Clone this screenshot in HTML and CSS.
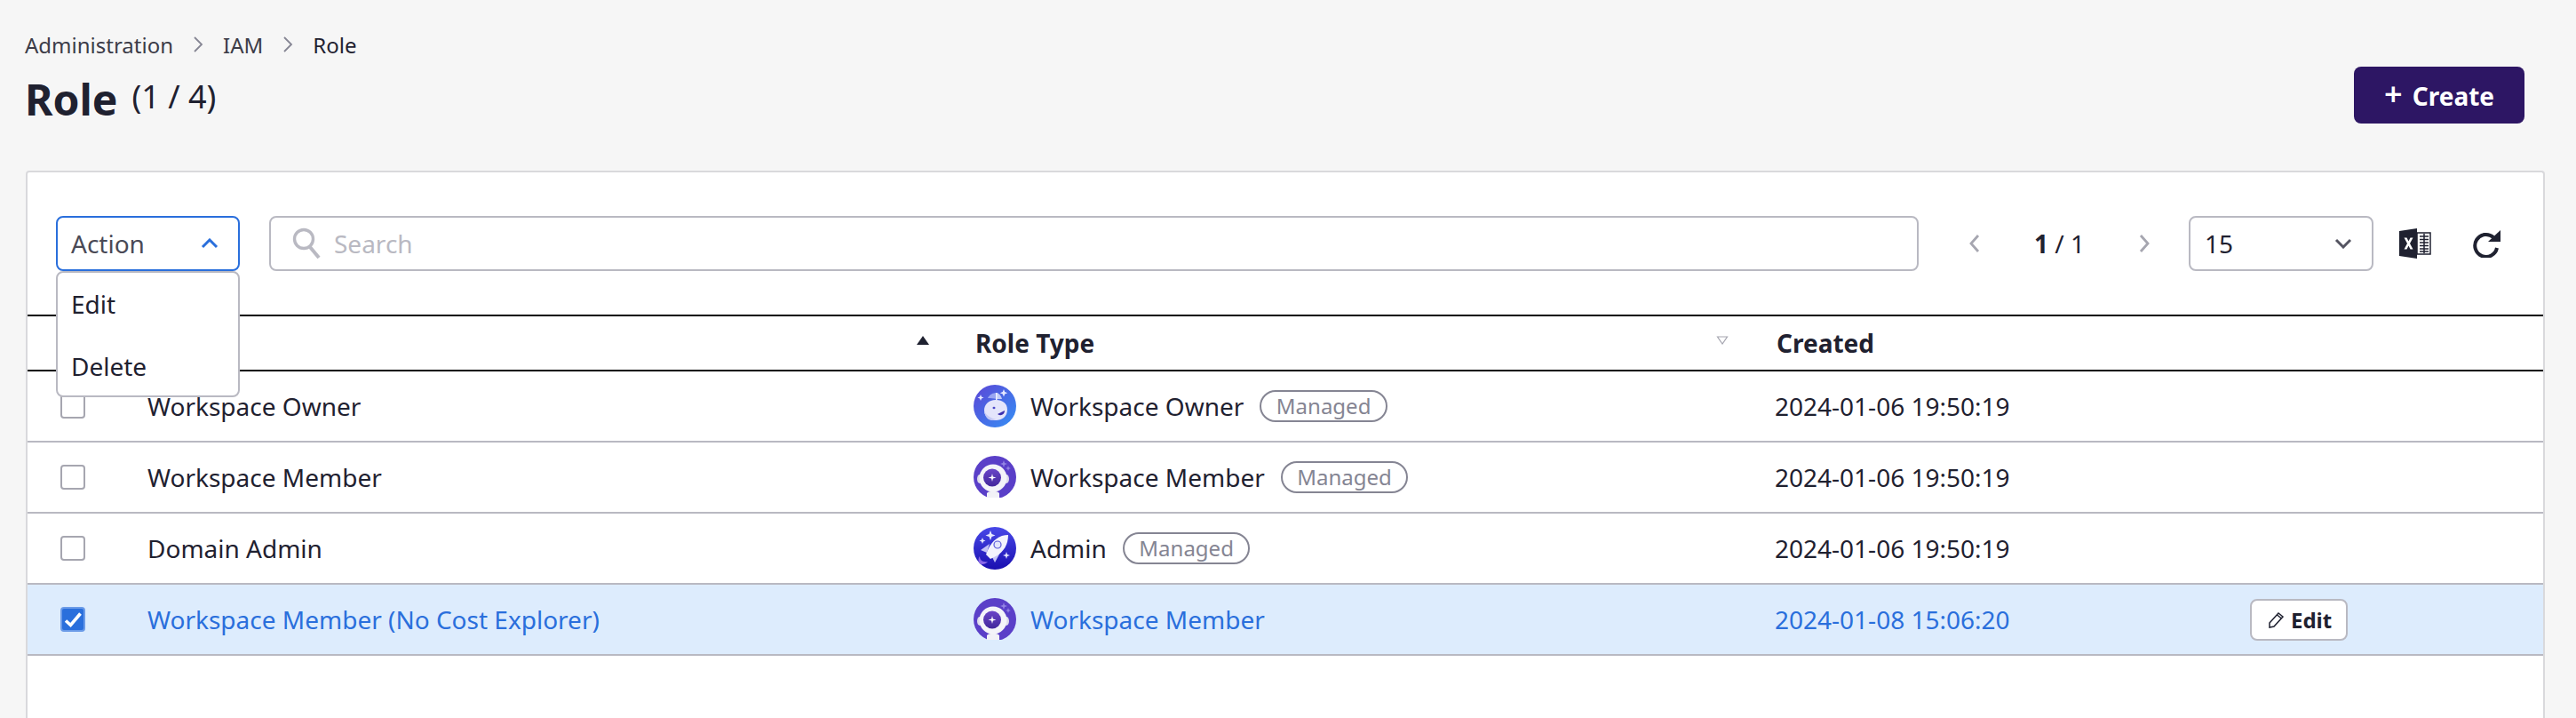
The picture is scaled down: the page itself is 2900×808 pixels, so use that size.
FILE: index.html
```html
<!DOCTYPE html>
<html lang="en">
<head>
    <meta charset="UTF-8">
    <title>Role</title>
    <link rel="stylesheet" href="styles.css">
</head>
<body>
    <svg class="defs" width="0" height="0">
        <defs>
            <linearGradient id="ownerBg" x1="0" y1="0" x2="1" y2="1">
                <stop offset="0" stop-color="#5b45d6"/>
                <stop offset="1" stop-color="#3590f5"/>
            </linearGradient>
            <linearGradient id="adminBg" x1="0" y1="0" x2="0" y2="1">
                <stop offset="0" stop-color="#4848e8"/>
                <stop offset="1" stop-color="#1a0fb0"/>
            </linearGradient>
            <linearGradient id="visorBg" x1="0" y1="0" x2="0" y2="1">
                <stop offset="0" stop-color="#6a45c8"/>
                <stop offset="1" stop-color="#42279c"/>
            </linearGradient>
            <symbol id="iconOwner" viewBox="0 0 48 48">
                <circle cx="24" cy="24" r="24" fill="url(#ownerBg)"/>
                <path d="M16 15c2-4 6-6 10-6v7c-4-1-7-1-10-1z" fill="#9aa6f2"/>
                <path d="M26 9c2 0 5 3 6 7l-6 0z" fill="#c3ccf8"/>
                <rect x="25" y="9" width="1.500" height="9" fill="#eef0ff"/>
                <path d="M12 29c0-7 5-12 13-12s13 4 13 11c0 8-6 12-13 12-3 0-6 0-8-2-3-2-5-5-5-9z" fill="#e4e5fb"/>
                <path d="M12 30c3 5 8 8 14 9l-5 1c-5 0-8-4-9-10z" fill="#c4c9f5"/>
                <ellipse cx="23" cy="26" rx="1.500" ry="1.300" fill="#4a46c8"/>
                <path d="M27 33l8-4c0 4-4 7-8 4z" fill="#3b2fae"/>
                <path d="M8 11l1 2.500 2.500 1-2.500 1-1 2.500-1-2.500-2.500-1 2.500-1z M34 5l1.200 3 3 1.200-3 1.200-1.200 3-1.200-3-3-1.200 3-1.200z" fill="#e6e9ff"/>
            </symbol>
            <symbol id="iconMember" viewBox="0 0 48 48">
                <clipPath id="memberClip"><path d="M0 0h48v47H0z"/></clipPath>
                <g clip-path="url(#memberClip)">
                    <circle cx="24" cy="24" r="24" fill="#5a3fc8"/>
                    <path d="M15 42c2-3 12-3 14 0v6H15z" fill="#f2f2f7"/>
                    <ellipse cx="7" cy="26" rx="3" ry="5" fill="#dcdbe9"/>
                    <ellipse cx="37" cy="26" rx="3" ry="5" fill="#dcdbe9"/>
                    <circle cx="22" cy="25" r="15.500" fill="#f4f4f9"/>
                    <circle cx="21" cy="24.500" r="10" fill="url(#visorBg)"/>
                    <path d="M21 20l.9 3.600 3.600.9-3.600.9-.9 3.600-.9-3.600-3.600-.9 3.600-.9z" fill="#fff"/>
                    <path d="M34 5l1 3 3 1-3 1-1 3-1-3-3-1 3-1z M39 11l.8 2.200 2.200.8-2.200.8-.8 2.200-.8-2.200-2.200-.8 2.200-.8z" fill="#9485e4"/>
                </g>
            </symbol>
            <symbol id="iconAdmin" viewBox="0 0 48 48">
                <circle cx="24" cy="24" r="24" fill="url(#adminBg)"/>
                <path d="M7 33c0 4 3 7 9 6-2 3-7 4-9 2s-2-6 0-8z" fill="#8a68e8"/>
                <path d="M8 26l10-7-3 10z M24 40l6-11-9 5z" fill="#c4c2f6"/>
                <path d="M39 9c-10 0-18 6-23 17l-2 5 5 5 6-3c9-5 14-13 14-24z" fill="#f3f3fd"/>
                <circle cx="27" cy="20" r="4" fill="#e3e5fb" stroke="#5a5ad8" stroke-width="1.200"/>
                <path d="M19 4l1.500 4 4 1.500-4 1.500-1.500 4-1.500-4-4-1.500 4-1.500z M10 12l1 2.500 2.500 1-2.500 1-1 2.500-1-2.500-2.500-1 2.500-1z M37 28l1 3 3 1-3 1-1 3-1-3-3-1 3-1z" fill="#e6e9ff"/>
            </symbol>
        </defs>
    </svg>

    <header class="page-head">
        <nav class="breadcrumb">
            <span>Administration</span>
            <svg class="crumb-arrow" viewBox="0 0 12 20"><path d="M2 2l8 8-8 8" fill="none" stroke="#858593" stroke-width="1.800"/></svg>
            <span>IAM</span>
            <svg class="crumb-arrow" viewBox="0 0 12 20"><path d="M2 2l8 8-8 8" fill="none" stroke="#858593" stroke-width="1.800"/></svg>
            <span class="current">Role</span>
        </nav>
        <div class="title-row">
            <h1>Role</h1>
            <span class="count">(1 / 4)</span>
            <button class="btn-create"><span class="plus">+</span> Create</button>
        </div>
    </header>

    <section class="card">
        <div class="toolbar">
            <div class="action-wrap">
                <div class="action">
                    <span>Action</span>
                    <svg class="caret" viewBox="0 0 20 12"><path d="M2 10l8-8 8 8" fill="none" stroke="#2a6fdc" stroke-width="3"/></svg>
                </div>
                <ul class="action-menu">
                    <li>Edit</li>
                    <li>Delete</li>
                </ul>
            </div>
            <div class="search">
                <svg class="search-icon" viewBox="0 0 32 36"><circle cx="13" cy="13" r="10.500" fill="none" stroke="#b9b9c2" stroke-width="3.400"/><path d="M20 22l10 12" stroke="#b9b9c2" stroke-width="4"/></svg>
                <span>Search</span>
            </div>
            <div class="pager">
                <svg class="pager-arrow" viewBox="0 0 14 22"><path d="M11 2L3 11l8 9" fill="none" stroke="#a6a6b0" stroke-width="2.800"/></svg>
                <span class="pages"><b>1</b> / 1</span>
                <svg class="pager-arrow" viewBox="0 0 14 22"><path d="M3 2l8 9-8 9" fill="none" stroke="#a6a6b0" stroke-width="2.800"/></svg>
            </div>
            <div class="page-size">
                <span>15</span>
                <svg class="caret" viewBox="0 0 20 12"><path d="M2 2l8 8 8-8" fill="none" stroke="#555562" stroke-width="3"/></svg>
            </div>
            <svg class="excel" viewBox="0 0 36 34">
                <path d="M20 5h15v24H20z" fill="#fff" stroke="#1f2130" stroke-width="1.500"/>
                <path d="M23 9h10M23 12.500h10M23 16h10M23 19.500h10M23 23h10M23 26h10M28 6v22" stroke="#1f2130" stroke-width="1.500"/>
                <path d="M0 3L20 0v34L0 31z" fill="#1f2130"/>
                <path d="M5.500 10.500h3l2 4 2-4h3l-3.500 6.500 3.500 6.500h-3l-2-4-2 4h-3L9 17z" fill="#fff"/>
            </svg>
            <svg class="refresh" viewBox="0 0 32 31">
                <path d="M27 20a12.500 12.500 0 1 1-4-12" fill="none" stroke="#1f2130" stroke-width="4"/>
                <path d="M31 0v13H17z" fill="#1f2130"/>
            </svg>
        </div>

        <table class="role-table">
            <colgroup>
                <col class="col-check"><col class="col-name"><col class="col-type"><col class="col-created"><col>
            </colgroup>
            <thead>
                <tr>
                    <th></th>
                    <th>
                        <div class="th-in">Name
                            <svg class="sort" viewBox="0 0 14 10"><path d="M7 0l7 10H0z" fill="#1f2130"/></svg>
                        </div>
                    </th>
                    <th>
                        <div class="th-in">Role Type
                            <svg class="sort" viewBox="0 0 14 10"><path d="M1.500 1h11L7 9z" fill="none" stroke="#a6a6b0" stroke-width="1.200"/></svg>
                        </div>
                    </th>
                    <th class="th-created">Created</th>
                    <th></th>
                </tr>
            </thead>
            <tbody>
                <tr>
                    <td><span class="check"></span></td>
                    <td>Workspace Owner</td>
                    <td><div class="type"><svg class="type-icon"><use href="#iconOwner"/></svg>Workspace Owner<span class="badge">Managed</span></div></td>
                    <td>2024-01-06 19:50:19</td>
                    <td></td>
                </tr>
                <tr>
                    <td><span class="check"></span></td>
                    <td>Workspace Member</td>
                    <td><div class="type"><svg class="type-icon"><use href="#iconMember"/></svg>Workspace Member<span class="badge">Managed</span></div></td>
                    <td>2024-01-06 19:50:19</td>
                    <td></td>
                </tr>
                <tr>
                    <td><span class="check"></span></td>
                    <td>Domain Admin</td>
                    <td><div class="type"><svg class="type-icon"><use href="#iconAdmin"/></svg>Admin<span class="badge">Managed</span></div></td>
                    <td>2024-01-06 19:50:19</td>
                    <td></td>
                </tr>
                <tr class="selected">
                    <td>
                        <span class="check checked">
                            <svg viewBox="0 0 24 24"><path d="M4 13.500l5.500 5L20.500 5.500" fill="none" stroke="#fff" stroke-width="3.600"/></svg>
                        </span>
                    </td>
                    <td>Workspace Member (No Cost Explorer)</td>
                    <td><div class="type"><svg class="type-icon"><use href="#iconMember"/></svg>Workspace Member</div></td>
                    <td>2024-01-08 15:06:20</td>
                    <td>
                        <button class="btn-edit">
                            <svg viewBox="0 0 20 20"><path d="M2 14L12 3l5 4L7 18l-5 1z M10.500 5l5 4" fill="none" stroke="#1f2130" stroke-width="1.500"/></svg>
                            Edit
                        </button>
                    </td>
                </tr>
            </tbody>
        </table>
    </section>
</body>
</html>
```

FILE: styles.css
```css
* {
    box-sizing: border-box;
}

html, body {
    height: 100%;
}

body {
    display: flex;
    flex-direction: column;
    margin: 0;
    background-color: #f6f6f6;
    color: #1f2130;
    font-family: "Noto Sans", Arial, sans-serif;
    font-size: 28px;
    overflow: hidden;
}

.defs {
    position: absolute;
}

.page-head {
    padding: 32px 58px 0 28px;
}

.breadcrumb {
    display: flex;
    align-items: center;
    height: 36px;
    font-size: 24px;
    color: #3c3c48;
}

.breadcrumb .current {
    color: #1f2130;
}

.crumb-arrow {
    width: 12px;
    height: 20px;
    margin: 0 22px;
}

.title-row {
    display: flex;
    align-items: center;
    height: 72px;
    margin-top: 7px;
}

h1 {
    margin: 0 16px 0 0;
    font-size: 48px;
    font-weight: 700;
}

.count {
    font-size: 36px;
    margin-bottom: 6px;
}

.btn-create {
    margin-left: auto;
    margin-bottom: 8px;
    width: 192px;
    height: 64px;
    border: none;
    border-radius: 8px;
    background-color: #2d1664;
    color: #fff;
    font-family: inherit;
    font-size: 28px;
    font-weight: 700;
}

.plus {
    font-size: 36px;
    line-height: 1;
    font-weight: 600;
    margin-right: 4px;
}

.card {
    flex: 1;
    margin: 45px 35px 0 29px;
    background-color: #fff;
    border: 2px solid #d9d9dc;
    border-bottom: none;
    border-radius: 4px 4px 0 0;
}

.toolbar {
    display: flex;
    align-items: center;
    height: 160px;
    padding: 48px 0 48px 32px;
}

.action-wrap {
    position: relative;
    width: 207px;
    height: 62px;
}

.action {
    display: flex;
    align-items: center;
    justify-content: space-between;
    height: 62px;
    padding: 0 22px 0 15px;
    border: 2px solid #2a6fdc;
    border-radius: 8px;
    color: #4a4a56;
}

.caret {
    width: 20px;
    height: 12px;
}

.action-menu {
    position: absolute;
    top: 62px;
    left: 0;
    z-index: 2;
    width: 207px;
    height: 142px;
    margin: 0;
    padding: 0;
    list-style: none;
    background-color: #fff;
    border: 2px solid #b9b9c2;
    border-radius: 8px;
}

.action-menu li {
    height: 70px;
    line-height: 70px;
    padding-left: 15px;
}

.search {
    display: flex;
    align-items: center;
    width: 1857px;
    height: 62px;
    margin-left: 33px;
    padding-left: 24px;
    border: 2px solid #b9b9c2;
    border-radius: 8px;
    color: #b9b9c2;
}

.search-icon {
    width: 32px;
    height: 36px;
    margin-right: 15px;
}

.pager {
    display: flex;
    align-items: center;
    justify-content: space-between;
    width: 304px;
    padding: 0 43px 0 56px;
}

.pager-arrow {
    width: 14px;
    height: 22px;
}

.pages b {
    font-weight: 700;
}

.page-size {
    display: flex;
    align-items: center;
    justify-content: space-between;
    width: 208px;
    height: 62px;
    padding: 0 22px 0 16px;
    border: 2px solid #b9b9c2;
    border-radius: 8px;
}

.excel {
    width: 36px;
    height: 34px;
    margin-left: 29px;
}

.refresh {
    width: 32px;
    height: 31px;
    margin-left: 47px;
}

.role-table {
    width: 100%;
    border-collapse: collapse;
    table-layout: fixed;
}

.col-check {
    width: 135px;
}

.col-name {
    width: 932px;
}

.col-type {
    width: 900px;
}

.col-created {
    width: 535px;
}

.role-table th {
    height: 62px;
    padding: 0;
    text-align: left;
    font-weight: 700;
    border-top: 2px solid #000;
    border-bottom: 2px solid #000;
}

.role-table .th-created {
    padding-left: 2px;
}

.th-in {
    display: flex;
    align-items: center;
    justify-content: space-between;
    padding-right: 52px;
}

.sort {
    width: 14px;
    height: 10px;
    margin-bottom: 6px;
}

.role-table td {
    height: 80px;
    padding: 0;
    border-bottom: 2px solid #b9b9c2;
}

.check {
    display: block;
    width: 28px;
    height: 28px;
    margin-left: 37px;
    background-color: #fff;
    border: 2px solid #a6a6b0;
    border-radius: 4px;
}

.check.checked {
    background-color: #2a6fdc;
    border-color: #6b9be8;
}

.check svg {
    display: block;
    width: 24px;
    height: 24px;
}

.type {
    display: flex;
    align-items: center;
}

.type-icon {
    width: 48px;
    height: 48px;
    margin: 0 16px 0 -2px;
}

.badge {
    height: 36px;
    line-height: 32px;
    margin-left: 18px;
    padding: 0 16.500px;
    border: 2px solid #858593;
    border-radius: 18px;
    color: #858593;
    font-size: 24px;
}

.selected td {
    background-color: #ddecfd;
    color: #2a6fdc;
}

.btn-edit {
    display: flex;
    align-items: center;
    width: 110px;
    height: 47px;
    padding: 0 0 0 18px;
    background-color: #fff;
    border: 2px solid #b9b9c2;
    border-radius: 8px;
    color: #1f2130;
    font-family: inherit;
    font-size: 24px;
    font-weight: 700;
}

.btn-edit svg {
    width: 20px;
    height: 20px;
    margin-right: 6px;
}
```
